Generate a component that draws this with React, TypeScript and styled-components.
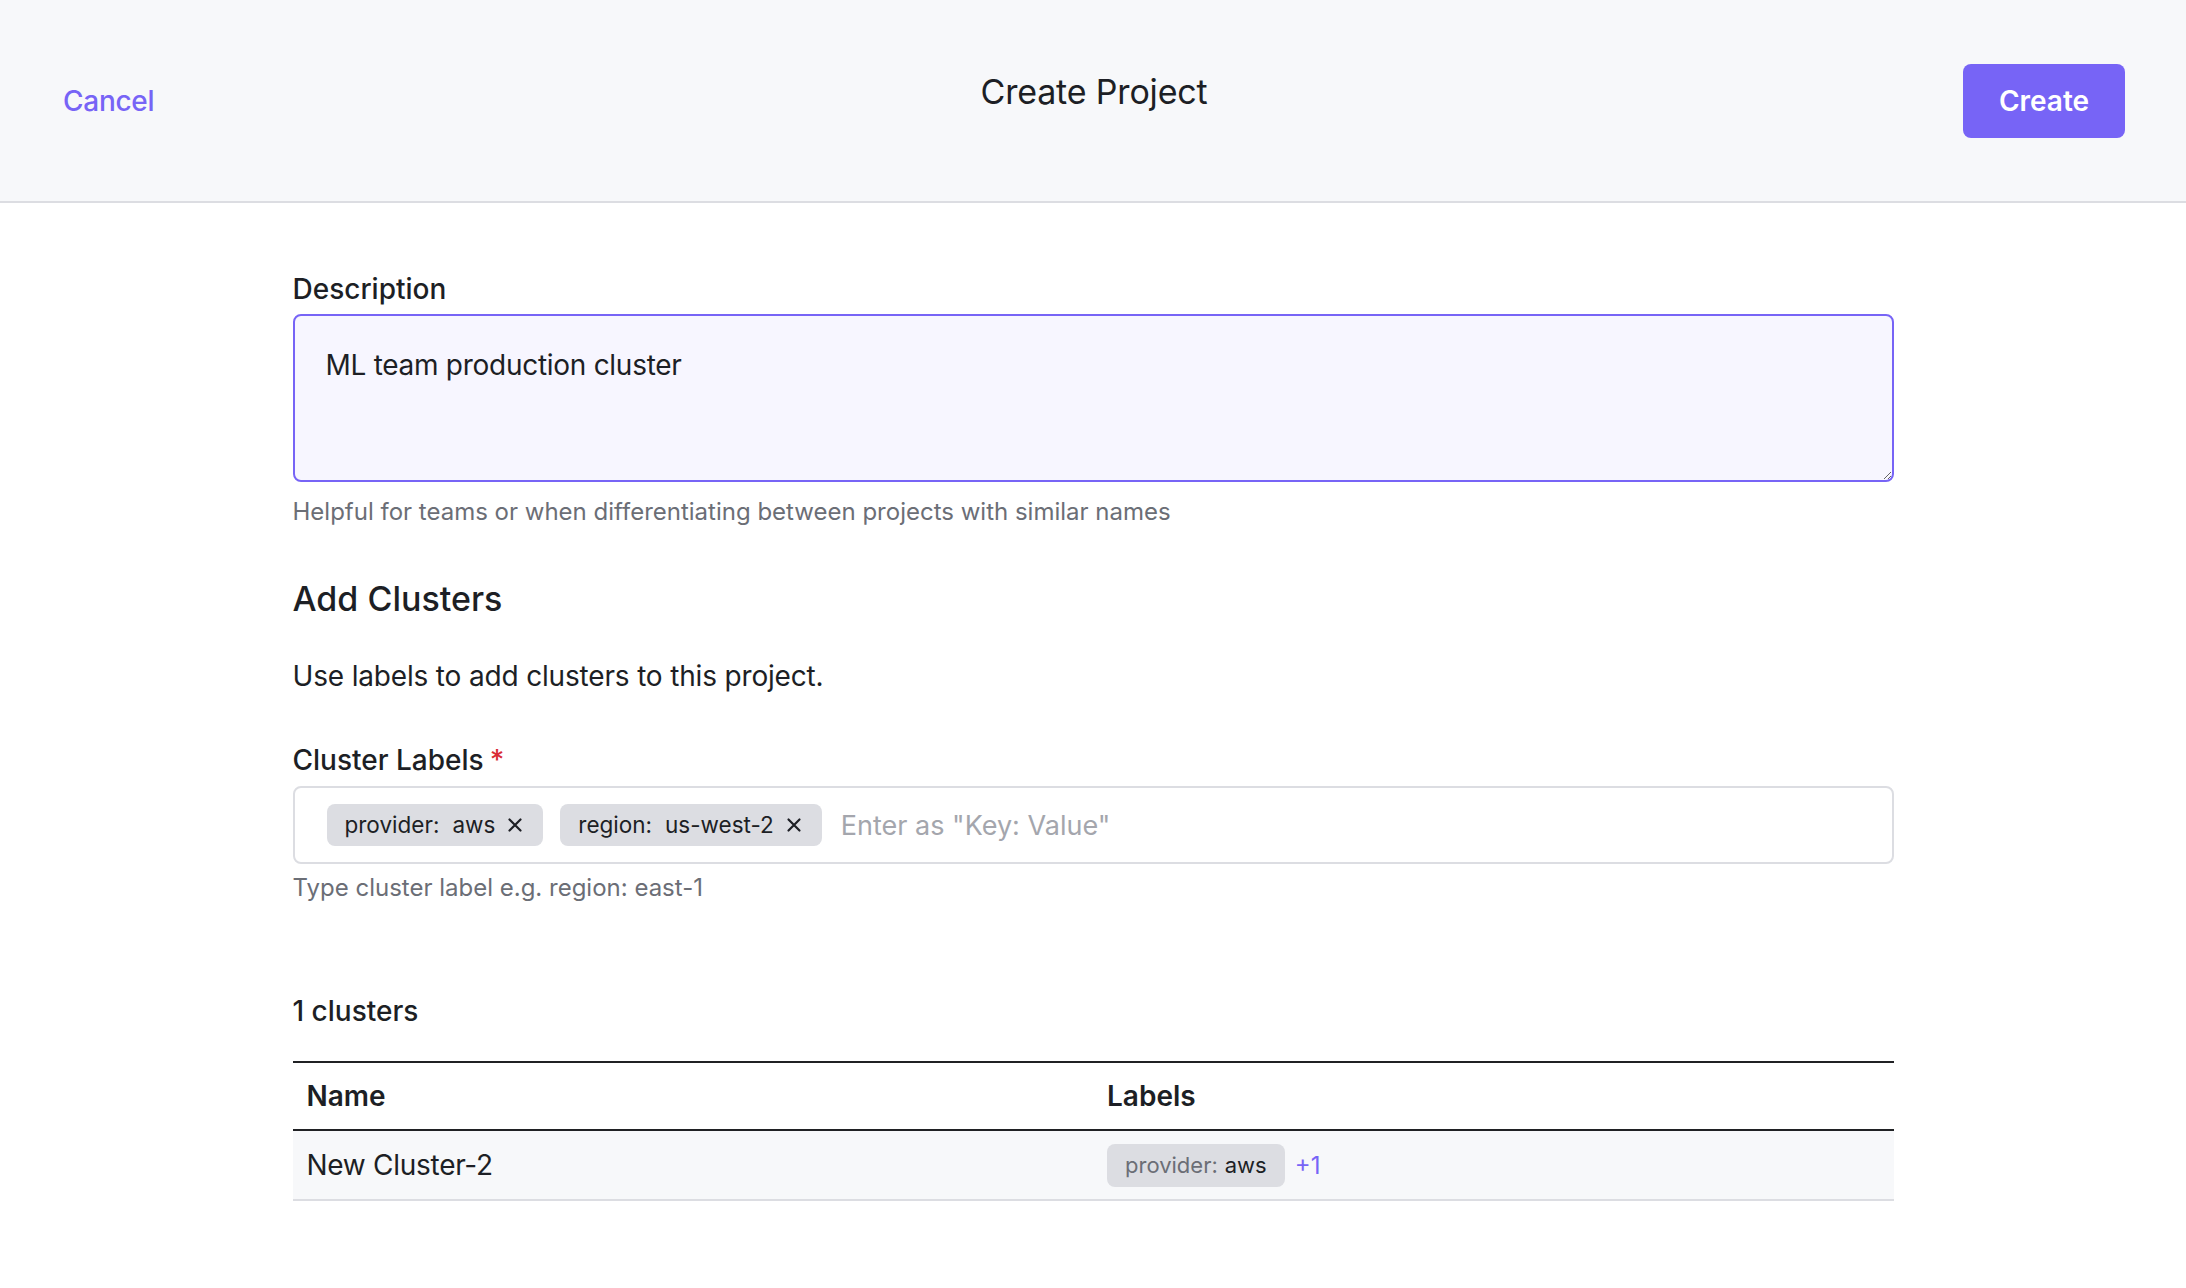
import React from "react";
import styled, { createGlobalStyle } from "styled-components";

const GlobalStyle = createGlobalStyle`
  html, body { margin: 0; padding: 0; background: #ffffff; }
  body {
    font-family: Inter, "Noto Sans", "Liberation Sans", sans-serif;
    color: #1d1f25;
    -webkit-font-smoothing: antialiased;
  }
  * { box-sizing: border-box; }
`;

const purple = "#7764f6";

const Header = styled.header`
  height: 203px;
  background: #f7f8fa;
  border-bottom: 2px solid #dcdde2;
  display: grid;
  grid-template-columns: 1fr auto 1fr;
  align-items: center;
  padding: 0 61px 0 63px;
`;

const CancelLink = styled.a`
  justify-self: start;
  color: ${purple};
  font-size: 28px;
  font-weight: 500;
  line-height: 34px;
  letter-spacing: -0.01em;
  cursor: pointer;
`;

const Title = styled.h1`
  margin: 0 0 17px;
  font-size: 34px;
  font-weight: 400;
  line-height: 42px;
  color: #1d1f25;
  letter-spacing: -0.005em;
`;

const PrimaryButton = styled.button`
  justify-self: end;
  width: 162px;
  height: 74px;
  border: none;
  border-radius: 8px;
  background: ${purple};
  color: #ffffff;
  font-family: inherit;
  font-size: 28px;
  font-weight: 600;
  cursor: pointer;
`;

const Content = styled.main`
  width: 1601px;
  margin: 0 auto;
  padding-top: 69px;
  display: flex;
  flex-direction: column;
`;

const Label = styled.label<{ $gap?: number }>`
  display: block;
  margin-top: ${(p) => p.$gap ?? 0}px;
  font-size: 28px;
  font-weight: 500;
  line-height: 34px;
  color: #1d1f25;
`;

const Required = styled.span`
  color: #d92d35;
  margin-left: 6px;
`;

const TextArea = styled.textarea`
  margin-top: 8px;
  width: 100%;
  height: 168px;
  border: 2px solid ${purple};
  border-radius: 8px;
  background: #f7f6ff;
  padding: 32px 31px;
  font-family: inherit;
  font-size: 28px;
  line-height: 34px;
  letter-spacing: -0.01em;
  color: #1d1f25;
  outline: none;
  resize: vertical;
`;

const Helper = styled.p<{ $gap: number }>`
  margin: ${(p) => p.$gap}px 0 0;
  font-size: 24px;
  line-height: 30px;
  color: #6b6e76;
`;

const SectionTitle = styled.h2`
  margin: 51px 0 0;
  font-size: 34px;
  font-weight: 500;
  line-height: 42px;
  color: #1d1f25;
`;

const Paragraph = styled.p`
  margin: 39px 0 0;
  font-size: 28px;
  line-height: 34px;
  letter-spacing: -0.006em;
  color: #1d1f25;
`;

const LabelInput = styled.div`
  margin-top: 9px;
  height: 78px;
  border: 2px solid #dcdde2;
  border-radius: 8px;
  background: #ffffff;
  display: flex;
  align-items: center;
  gap: 17px;
  padding: 0 32px;
`;

const Chip = styled.span<{ $muted?: boolean }>`
  display: inline-flex;
  align-items: center;
  height: ${(p) => (p.$muted ? 43 : 42)}px;
  padding: 0 ${(p) => (p.$muted ? 18 : 20)}px 0 18px;
  background: #dcdde2;
  border-radius: 8px;
  font-size: ${(p) => (p.$muted ? 22 : 22.5)}px;
  line-height: 28px;
  color: #1d1f25;
  white-space: nowrap;
`;

const ChipKey = styled.span<{ $muted?: boolean }>`
  color: ${(p) => (p.$muted ? "#6b6e76" : "#1d1f25")};
  margin-right: ${(p) => (p.$muted ? 7 : 13)}px;
`;

const RemoveIcon = styled.svg`
  margin-left: 12px;
  width: 16px;
  height: 16px;
  flex: none;
`;

const Placeholder = styled.input`
  flex: 1;
  border: none;
  outline: none;
  background: transparent;
  font-family: inherit;
  font-size: 27px;
  color: #1d1f25;
  margin-left: 2px;
  padding: 0;
  &::placeholder { color: #a4a6ad; }
`;

const Count = styled.h3`
  margin: 91px 0 0;
  font-size: 28px;
  font-weight: 500;
  line-height: 34px;
  color: #1d1f25;
`;

const Table = styled.table`
  margin-top: 33px;
  width: 100%;
  border-collapse: collapse;
  table-layout: fixed;
  border-top: 2px solid #202124;
`;

const Th = styled.th`
  height: 68px;
  padding: 0 14px;
  text-align: left;
  font-size: 28px;
  font-weight: 600;
  color: #1d1f25;
  border-bottom: 2px solid #202124;
`;

const Tr = styled.tr`
  background: #f7f8fa;
  border-bottom: 2px solid #dcdde2;
`;

const Td = styled.td`
  height: 70px;
  padding: 0 14px;
  font-size: 28px;
  letter-spacing: -0.01em;
  color: #1d1f25;
`;

const LabelsCell = styled.div`
  display: flex;
  align-items: center;
  gap: 10px;
  letter-spacing: 0;
`;

const More = styled.span`
  color: ${purple};
  font-size: 24px;
`;

const XIcon = () => (
  <RemoveIcon viewBox="0 0 16 16" fill="none">
    <path d="M2.5 2.5 L13.5 13.5 M13.5 2.5 L2.5 13.5" stroke="#1d1f25" strokeWidth="2.2" strokeLinecap="round" />
  </RemoveIcon>
);

export default function App() {
  return (
    <>
      <GlobalStyle />
      <Header>
        <CancelLink>Cancel</CancelLink>
        <Title>Create Project</Title>
        <PrimaryButton>Create</PrimaryButton>
      </Header>
      <Content>
        <Label>Description</Label>
        <TextArea defaultValue="ML team production cluster" />
        <Helper $gap={15}>Helpful for teams or when differentiating between projects with similar names</Helper>

        <SectionTitle>Add Clusters</SectionTitle>
        <Paragraph>Use labels to add clusters to this project.</Paragraph>

        <Label $gap={50}>
          Cluster Labels<Required>*</Required>
        </Label>
        <LabelInput>
          <Chip>
            <ChipKey>provider:</ChipKey>aws
            <XIcon />
          </Chip>
          <Chip>
            <ChipKey>region:</ChipKey>us-west-2
            <XIcon />
          </Chip>
          <Placeholder placeholder='Enter as "Key: Value"' />
        </LabelInput>
        <Helper $gap={9}>Type cluster label e.g. region: east-1</Helper>

        <Count>1 clusters</Count>
        <Table>
          <thead>
            <tr>
              <Th>Name</Th>
              <Th>Labels</Th>
            </tr>
          </thead>
          <tbody>
            <Tr>
              <Td>New Cluster-2</Td>
              <Td>
                <LabelsCell>
                  <Chip $muted>
                    <ChipKey $muted>provider:</ChipKey>aws
                  </Chip>
                  <More>+1</More>
                </LabelsCell>
              </Td>
            </Tr>
          </tbody>
        </Table>
      </Content>
    </>
  );
}
